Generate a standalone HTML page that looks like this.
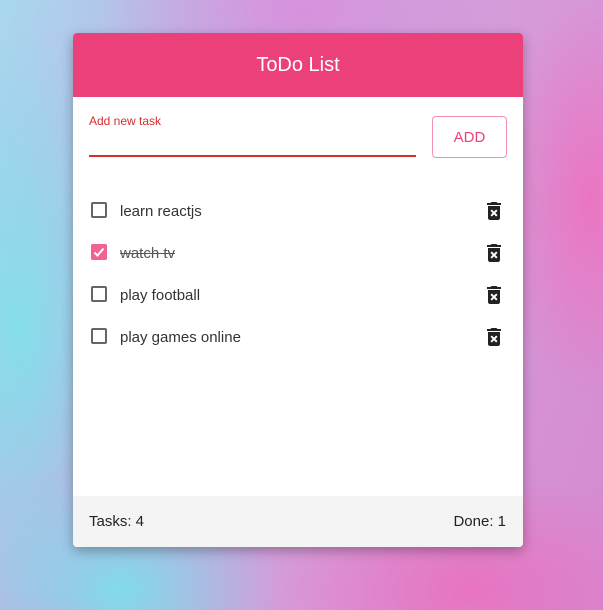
<!DOCTYPE html>
<html><head><meta charset="utf-8"><style>
*{margin:0;padding:0;box-sizing:border-box}
html,body{width:603px;height:610px;overflow:hidden}
body{font-family:"Liberation Sans",sans-serif;position:relative;
background:
radial-gradient(ellipse 120px 300px at 20px 330px, rgba(120,230,235,.8), transparent),
radial-gradient(ellipse 90px 200px at 590px 200px, rgba(240,110,190,.8), transparent),
radial-gradient(ellipse 160px 120px at 120px 590px, rgba(120,225,235,.9), transparent),
radial-gradient(ellipse 200px 120px at 470px 590px, rgba(235,110,190,.85), transparent),
radial-gradient(ellipse 200px 80px at 300px 10px, rgba(220,140,220,.8), transparent),
linear-gradient(110deg,#a8d8ee 0%,#c6a8e2 35%,#d79ad8 65%,#d48ad0 100%);}
.card{position:absolute;left:73px;top:33px;width:450px;height:514px;background:#fff;border-radius:4px;overflow:hidden;box-shadow:0 4px 12px rgba(0,0,0,.3)}
.hd{height:64px;background:#ec407a;color:#fff;font-size:20px;text-align:center;line-height:64px}
.lbl{position:absolute;left:16px;top:81px;font-size:12px;color:#d32f2f}
.line{position:absolute;left:16px;top:122px;width:327px;height:2px;background:#d32f2f}
.btn{position:absolute;left:359px;top:83px;width:75px;height:42px;border:1px solid #f48fb1;border-radius:4px;color:#ec407a;font-size:15px;text-align:center;line-height:42px}
.row{position:absolute;left:0;width:450px;height:30px}
.cb{position:absolute;left:18px;top:7px;width:16px;height:16px;border:2px solid #666;border-radius:2px}
.cb.on{background:#f06292;border-color:#f06292}
.tx{position:absolute;left:47px;top:8px;font-size:15px;color:#333}
.tr{position:absolute;left:409px;top:4px}
.ft{position:absolute;left:0;top:463px;width:450px;height:51px;background:#f4f4f4;font-size:15px;color:#222;line-height:51px;padding:0 17px 0 16px}
</style></head><body>
<div class="card">
<div class="hd">ToDo List</div>
<div class="lbl">Add new task</div><div class="line"></div>
<div class="btn">ADD</div>
<div class="row" style="top:162px"><div class="cb"></div><div class="tx">learn reactjs</div><svg class="tr" width="24" height="24" viewBox="0 0 24 24"><path fill="#222" d="M6 19c0 1.1.9 2 2 2h8c1.1 0 2-.9 2-2V7H6v12zm2.46-7.12l1.41-1.41L12 12.59l2.12-2.12 1.41 1.41L13.41 14l2.12 2.12-1.41 1.41L12 15.41l-2.12 2.12-1.41-1.41L10.59 14l-2.13-2.12zM15.5 4l-1-1h-5l-1 1H5v2h14V4z"/></svg></div>
<div class="row" style="top:204px"><div class="cb on"><svg width="12" height="12" viewBox="0 0 12 12" style="position:absolute;left:0;top:0"><path d="M1.5 6.5l3 3 6-7" stroke="#fff" stroke-width="2" fill="none"/></svg></div><div class="tx" style="text-decoration:line-through;color:#555">watch tv</div><svg class="tr" width="24" height="24" viewBox="0 0 24 24"><path fill="#222" d="M6 19c0 1.1.9 2 2 2h8c1.1 0 2-.9 2-2V7H6v12zm2.46-7.12l1.41-1.41L12 12.59l2.12-2.12 1.41 1.41L13.41 14l2.12 2.12-1.41 1.41L12 15.41l-2.12 2.12-1.410-1.41L10.59 14l-2.13-2.12zM15.5 4l-1-1h-5l-1 1H5v2h14V4z"/></svg></div>
<div class="row" style="top:246px"><div class="cb"></div><div class="tx">play football</div><svg class="tr" width="24" height="24" viewBox="0 0 24 24"><path fill="#222" d="M6 19c0 1.1.9 2 2 2h8c1.1 0 2-.9 2-2V7H6v12zm2.46-7.12l1.41-1.41L12 12.59l2.12-2.12 1.41 1.41L13.41 14l2.12 2.12-1.41 1.41L12 15.41l-2.12 2.12-1.41-1.41L10.59 14l-2.13-2.12zM15.5 4l-1-1h-5l-1 1H5v2h14V4z"/></svg></div>
<div class="row" style="top:288px"><div class="cb"></div><div class="tx">play games online</div><svg class="tr" width="24" height="24" viewBox="0 0 24 24"><path fill="#222" d="M6 19c0 1.1.9 2 2 2h8c1.1 0 2-.9 2-2V7H6v12zm2.46-7.12l1.41-1.41L12 12.59l2.12-2.12 1.41 1.41L13.41 14l2.12 2.12-1.41 1.41L12 15.41l-2.12 2.12-1.41-1.41L10.59 14l-2.13-2.12zM15.5 4l-1-1h-5l-1 1H5v2h14V4z"/></svg></div>
<div class="ft"><span>Tasks: 4</span><span style="float:right">Done: 1</span></div>
</div>
</body></html>
